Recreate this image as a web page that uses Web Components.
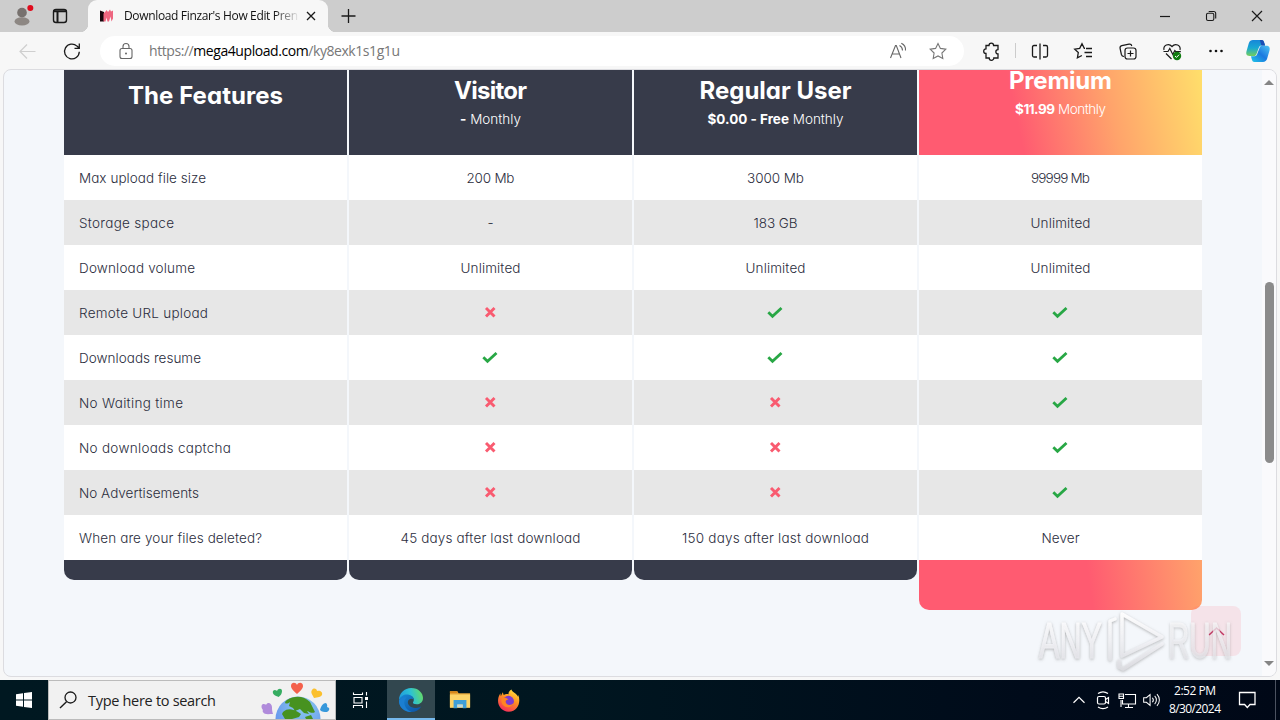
<!DOCTYPE html>
<html lang="en">
<head>
<meta charset="utf-8">
<title>Download</title>
<style>
  body {
    margin: 0;
    width: 1280px;
    height: 720px;
    overflow: hidden;
    display: flex;
    flex-direction: column;
    background: #f7f7f7;
    font-family: "Open Sans", "Noto Sans", sans-serif;
    color: #111;
  }
</style>
</head>
<body>
<browser-tabs></browser-tabs>
<browser-toolbar></browser-toolbar>
<page-view>
  <plan-table>
    <plan-column kind="names">
      <fit-text slot="title" w="155">The Features</fit-text>
      <plan-cell w="127">Max upload file size</plan-cell>
      <plan-cell w="95">Storage space</plan-cell>
      <plan-cell w="116">Download volume</plan-cell>
      <plan-cell w="129">Remote URL upload</plan-cell>
      <plan-cell w="122">Downloads resume</plan-cell>
      <plan-cell w="104">No Waiting time</plan-cell>
      <plan-cell w="152">No downloads captcha</plan-cell>
      <plan-cell w="120">No Advertisements</plan-cell>
      <plan-cell w="183">When are your files deleted?</plan-cell>
    </plan-column>
    <plan-column>
      <fit-text slot="title" w="73">Visitor</fit-text>
      <fit-text slot="price" w="61"><b>-</b> Monthly</fit-text>
      <plan-cell w="48">200 Mb</plan-cell>
      <plan-cell w="6">-</plan-cell>
      <plan-cell w="60">Unlimited</plan-cell>
      <plan-cell mark="no"></plan-cell>
      <plan-cell mark="yes"></plan-cell>
      <plan-cell mark="no"></plan-cell>
      <plan-cell mark="no"></plan-cell>
      <plan-cell mark="no"></plan-cell>
      <plan-cell w="180">45 days after last download</plan-cell>
    </plan-column>
    <plan-column>
      <fit-text slot="title" w="152">Regular User</fit-text>
      <fit-text slot="price" w="136"><b>$0.00 - Free</b> Monthly</fit-text>
      <plan-cell w="57">3000 Mb</plan-cell>
      <plan-cell w="44">183 GB</plan-cell>
      <plan-cell w="60">Unlimited</plan-cell>
      <plan-cell mark="yes"></plan-cell>
      <plan-cell mark="yes"></plan-cell>
      <plan-cell mark="no"></plan-cell>
      <plan-cell mark="no"></plan-cell>
      <plan-cell mark="no"></plan-cell>
      <plan-cell w="187">150 days after last download</plan-cell>
    </plan-column>
    <plan-column kind="premium">
      <fit-text slot="title" w="103">Premium</fit-text>
      <fit-text slot="price" w="91"><b>$11.99</b> Monthly</fit-text>
      <plan-cell w="59">99999 Mb</plan-cell>
      <plan-cell w="60">Unlimited</plan-cell>
      <plan-cell w="60">Unlimited</plan-cell>
      <plan-cell mark="yes"></plan-cell>
      <plan-cell mark="yes"></plan-cell>
      <plan-cell mark="yes"></plan-cell>
      <plan-cell mark="yes"></plan-cell>
      <plan-cell mark="yes"></plan-cell>
      <plan-cell w="38">Never</plan-cell>
    </plan-column>
  </plan-table>
</page-view>
<task-bar></task-bar>

<script>
const ICONS = {
  profile: `<g stroke="none"><circle cx="12" cy="8" r="5.800" fill="#77716e"/><ellipse cx="12" cy="18.500" rx="9" ry="5" fill="#8d8783"/><circle cx="22" cy="2.500" r="3.600" fill="#e00b1c"/></g>`,
  workspaces: `<rect x="5.5" y="5.5" width="13" height="13" rx="2.5" stroke-width="1.4"/><path d="M5 7.3h14M9.5 8v10" stroke-width="2"/>`,
  favicon: `<path d="M5 6.5l4 1.5v9.500H5z" fill="#16060d" stroke="none"/><path d="M8.500 17.500V9.500l2.500-2.500.5-1 1.500 2 2-2.500 1 2 2-1v8l-1.500 3-1-5-1.500 5h-1.500l-1-4-1 4z" fill="#ee6680" stroke="none"/>`,
  close: `<path d="M8 8l8 8M16 8l-8 8" stroke-width="1.3"/>`,
  plus: `<path d="M12.500 5v14M5.500 12h14" stroke-width="1.3"/>`,
  min: `<path d="M7 12.500h10" stroke-width="1.200"/>`,
  restore: `<rect x="7.500" y="9.200" width="7.300" height="7.300" rx="1.500"/><path d="M9.700 7.500h5c1.300 0 2 .7 2 2v5"/>`,
  exit: `<path d="M7 7l10 10M17 7L7 17" stroke-width="1.200"/>`,
  back: `<path d="M19.500 12.500h-15M11 5.500l-7 7 7 7" stroke="#cfcfcf" stroke-width="1.200"/>`,
  reload: `<path d="M19.300 12.700A7.400 7.400 0 1 1 17 7.100l2 1.800M19.300 4.500v4.800h-4.800" stroke-width="1.300"/>`,
  lock: `<rect x="6" y="9.500" width="12" height="10" rx="2" stroke="#666"/><path d="M9 9.500V7.500a3 3 0 0 1 6 0v2" stroke="#666"/><circle cx="12" cy="14.500" r="1" fill="#666" stroke="none"/>`,
  read: `<path d="M4.500 19L9.500 6.500h.8L15 19M6.300 15h7M13.500 6.500c2 1 3 2.500 3 5M15.300 4.300c3 1.400 4.500 4 4.200 7.200" stroke="#666"/>`,
  star: `<path d="M12 4.500l2.400 4.900 5.400.8-3.900 3.800.9 5.400-4.800-2.500-4.800 2.500.9-5.400-3.900-3.800 5.400-.8z" stroke="#777"/>`,
  puzzle: `<path d="M9 6.500a2.300 2.300 0 1 1 4.600 0H18v4.200a1.900 1.900 0 1 0 0 4.300v4h-4.200a2.300 2.300 0 0 1-4.600 0H6v-4.500a2.300 2.300 0 1 1 0-4.600V6.500z" stroke-width="1.300"/>`,
  split: `<path d="M12 4.500v16M9 6.500H6c-1 0-1.500.5-1.500 1.500v8.500c0 1 .5 1.500 1.500 1.500h3M15 6.500h3c1 0 1.500.5 1.500 1.500v8.500c0 1-.5 1.500-1.500 1.500h-3" stroke-width="1.300"/>`,
  favs: `<path d="M13 9.300h-.700L10 4.700 7.700 9.300l-5 .8 3.600 3.500-.9 5.300 4.500-2.400M14 9.500h6M12.500 13.500H20M14 17.500h6" stroke-width="1.300"/>`,
  collect: `<path d="M8 17.500c-1.500 0-2.300-.8-2.600-2l-1.300-6c-.3-1.500.4-2.500 1.700-2.800l7.200-1.500c1.500-.3 2.500.4 2.800 1.800" stroke-width="1.200"/><rect x="9" y="9" width="11" height="11" rx="2.500" stroke-width="1.200"/><path d="M14.500 11.500v6M11.500 14.500h6" stroke-width="1.200"/>`,
  health: `<path d="M4 11C3 6.500 8.500 3.500 12 7.500c3.500-4 9-1 8 3.500M6 14.500l5.500 5.500M3.500 12.500H8l1.800-3 3 6 2-4 1 1.200h5" stroke-width="1.200"/><circle cx="17" cy="17" r="4.200" fill="#107c10" stroke="none"/><path d="M15 17l1.500 1.400 2.600-2.700" stroke="#fff" stroke-width="1"/>`,
  dots: `<g fill="#111" stroke="none"><circle cx="6.500" cy="12" r="1.300"/><circle cx="12" cy="12" r="1.300"/><circle cx="17.500" cy="12" r="1.300"/></g>`,
  copilot: `<defs><linearGradient id="a" x1="0" y1="0" x2="0" y2="1"><stop offset="0" stop-color="#1686d9"/><stop offset=".5" stop-color="#18a8d3"/><stop offset="1" stop-color="#74cf5c"/></linearGradient><linearGradient id="b" x1="1" y1="0" x2="0" y2="1"><stop offset="0" stop-color="#4fc6f4"/><stop offset=".5" stop-color="#1b79e0"/><stop offset="1" stop-color="#20c7e8"/></linearGradient></defs><g stroke="none"><path d="M7 1h8.500c1.800 0 2.200 1 2.800 3l.8 2.500h-3.500c-1.700 0-2.400 1-2.900 2.600L10.500 15c-.5 1.500-1.300 2-2.700 2H3.500C.5 17-.2 15 .5 12.300l2.300-8C3.500 2 5 1 7 1z" fill="url(#a)"/><path d="M17 23H8.500c-1.800 0-2.200-1-2.800-3L5 17.300h3.500c1.700 0 2.300-.9 2.800-2.500L13.500 9c.5-1.500 1.200-2.200 2.700-2.200h4.300c3 0 3.700 2.200 3 4.800l-2.300 8C20.500 22 19 23 17 23z" fill="url(#b)"/><path d="M13.800 1h1.700c1.800 0 2.200 1 2.800 3l.8 2.600h-3.700z" fill="#1b4eb5"/></g>`,
  start: `<g fill="#fff" stroke="none"><path d="M4 6.200l7-1v6.300H4zM12 5.100L20 4v7.500h-8zM4 12.500h7v6.300l-7-1zM12 12.500h8V20l-8-1.100z"/></g>`,
  search: `<circle cx="14.500" cy="9.500" r="5.500" stroke-width="1.300"/><path d="M10.500 13.700L4 20" stroke-width="1.400"/>`,
  taskview: `<path d="M4.500 4.500v2h9v-2M4.500 20v-2.500h9V20M5 9.500h8v5.500H5zM17.500 4v3.500M17.500 13.500V20" stroke="#fff" stroke-width="1.100"/><rect x="16" y="9" width="3" height="3" fill="#fff" stroke="none"/>`,
  edge: `<defs><linearGradient id="c" x1="0" y1=".5" x2="1" y2=".3"><stop offset="0" stop-color="#1f9bdc"/><stop offset=".5" stop-color="#2cc1d5"/><stop offset="1" stop-color="#67dc63"/></linearGradient><linearGradient id="d" x1="0" y1="0" x2="1" y2="1"><stop offset="0" stop-color="#178ad8"/><stop offset="1" stop-color="#0d4fa0"/></linearGradient></defs><g stroke="none"><path d="M0 12C0 5 5.500 0 12.200 0 19.500 0 24 5 24 10c0 4-3 6.300-6.300 6.300-2.700 0-4-1-3.700-2 1.600-2 1-5.300-2-6.300C7 6.500 2 8 0 12z" fill="url(#c)"/><path d="M0 12.500C1.500 7.700 6 5.800 10 6.800c3 .8 4.700 2.700 4.600 5-1.600-2-5.100-1.200-5.700 1.700-.7 3.500 3.500 7.500 9.600 6.200 1.600-.3 2.900-1 3.700-1.300C20 22 16.300 24 12 24 5.300 24-.2 19 0 12.500z" fill="url(#d)"/><path d="M7.700 9.500C3 13 5.500 21.500 12.500 23.900 5.500 24.400 0 19 0 12.800 2 9.500 5 8.500 7.700 9.500z" fill="#1b7fd2"/></g>`,
  explorer: `<g stroke="none"><path d="M1 2.500h8l1.500 2H23V20H1z" fill="#e5a63a"/><path d="M1 6h22v14.500H1z" fill="#fdd469"/><path d="M1 2.500h8.200v2H1z" fill="#d98719"/><path d="M5 12h14v9h-4v-4H9v4H5z" fill="#3f9fd9"/><path d="M9 17h6v3H9z" fill="#bfd9e2"/></g>`,
  firefox: `<defs><linearGradient id="e" x1=".8" y1="0" x2=".3" y2="1"><stop offset="0" stop-color="#ffe43f"/><stop offset=".45" stop-color="#ff9022"/><stop offset="1" stop-color="#f52b5c"/></linearGradient></defs><g stroke="none"><path d="M3.500 4.500l.5 3 2-4 1 2.700C9 5 10.500 5.200 12 5.500c0-2.500 1.300-4 3.200-5 .2 2.600 5.300 4 6.800 7.500l.2-2C25 13 22.500 23.500 12 23.700 3.500 23.700-2.500 14 3.500 4.500z" fill="url(#e)"/><circle cx="12" cy="12.800" r="5.700" fill="#7c3bd0"/><path d="M5 9.500c3-1 5-.5 7 1.500-2 .2-3 1-3 2.500 1 4 6 4 8.500.8-1 5-8 6.700-11.500 2.200-1.500-2-1.800-4.500-1-7z" fill="#ff8423"/></g>`,
  up: `<path d="M6 15l6-6 6 6" stroke="#fff" stroke-width="1.300"/>`,
  meet: `<g stroke="#fff" stroke-width="1.200"><rect x="6.500" y="8.500" width="8" height="7.500" rx="1.500"/><path d="M14.500 11.500l3-2v6l-3-2M7 5.500c3-2 7-2 10 0M7 19c3 2 7 2 10 0"/></g>`,
  network: `<g stroke="#fff" stroke-width="1.100"><path d="M10 6.500h10.500v9.500H7.500v-4M13.500 16v3.500M10 19.500h8M6 12v7M4 6h4.500v4.500H4zM4 8.200h4.500"/></g>`,
  volume: `<g stroke="#fff" stroke-width="1.100"><path d="M4 9.500h3l4-3.500v12l-4-3.500H4zM13.500 9.500c1.300 1.500 1.300 3.500 0 5M16 7.500c2.500 2.500 2.500 6.500 0 9M18.500 5.500c3.500 3.700 3.500 9.300 0 13"/></g>`,
  notify: `<path d="M4.500 4.500h15.500v12h-5l-2.700 3-2.700-3H4.500z" stroke="#fff" stroke-width="1.300"/>`,
  yes: `<path d="M4.300 11.300l4.200 4L17.500 7" stroke="#28a745" stroke-width="2.800"/>`,
  no: `<path d="M7 7l8.500 8.500M15.500 7L7 15.500" stroke="#f95b70" stroke-width="2.900"/>`,
  earth: `<svg viewBox="0 0 72 38" width="72" height="38"><defs><radialGradient id="g" cx=".6" cy=".2" r=".9"><stop offset="0" stop-color="#8bcbee"/><stop offset=".7" stop-color="#6a9bee"/><stop offset="1" stop-color="#3b6fd8"/></radialGradient></defs><g stroke="none"><circle cx="38" cy="38" r="22.500" fill="url(#g)"/><path d="M27 19c8-5 17-4 23 2l5 10c-3 2-5 0-8-1l2 3-5-1-4-4-5 2-2-3-4-2 1-4c-4 3-7 1-3-2zM23 31c5-4 9-3 15 0l3 2-2 3-7 2h-7l-3-5zM45 36l6-2 2 4h-7z" fill="#479220"/><path d="M31 5c0-4 5-4 6-1 1-3 6-3 6 1 0 3-3 5-6 8-3-3-6-5-6-8z" fill="#f4604b"/><path d="M13 10c2-2 4 0 4 0 1-3 5-3 5 0 0 4-3 5-3 6-4-1-7-3-6-6z" fill="#36ad61"/><path d="M52 9c2-3 5-1 5 1 3-1 6 1 5 4-1 2-4 2-8 3-1-3-4-5-2-8z" fill="#fbc02e"/><path d="M3 23c3 0 3 1 3 1 2-4 6-1 6 2 0 2 0 4 1 7-4 0-9 1-10-2-1-1 0-2 0-2-2-2-2-5 0-6z" fill="#b08bdb"/><path d="M66 22c2 2 1 4 1 4 4 1 2 4 0 5-3 0-5 0-7-2 1-4 3-7 6-7z" fill="#3698db"/></g></svg>`
};

class UiIcon extends HTMLElement {
  constructor() {
    super();
    this.attachShadow({mode: "open"});
  }

  connectedCallback() {
    const size = this.getAttribute("size") || 24;
    this.shadowRoot.innerHTML = `
      <style>
        :host { display: inline-flex; flex: none; }
        svg { display: block; overflow: visible; }
      </style>
      <svg width="${size}" height="${size}" viewBox="0 0 24 24" fill="none" stroke="#1a1a1a" stroke-width="1.1">${ICONS[this.getAttribute("name")]}</svg>`;
  }
}

class PictureIcon extends HTMLElement {
  connectedCallback() {
    this.attachShadow({mode: "open"}).innerHTML = `
      <style>:host { display: block; flex: none; } svg { display: block; }</style>
      ${ICONS.earth}`;
  }
}

// a run of text spaced out (or in) to the width in its "w" attribute
class FitText extends HTMLElement {
  constructor() {
    super();
    this.attachShadow({mode: "open"}).innerHTML = `
      <style>
        :host { display: inline-block; white-space: nowrap; flex: none; }
        span { display: inline-block; }
        ::slotted(b) { font-weight: 700; }
      </style>
      <span><slot></slot></span>`;
  }

  connectedCallback() {
    const want = Number(this.getAttribute("w"));
    const run = this.shadowRoot.querySelector("span");
    const count = this.textContent.trim().length;
    this.style.width = want + "px";
    if (count > 1) {
      const natural = run.getBoundingClientRect().width;
      run.style.letterSpacing = (want - natural) / (count - 1) + "px";
    }
  }
}

class BrowserTabs extends HTMLElement {
  connectedCallback() {
    this.attachShadow({mode: "open"}).innerHTML = `
      <style>
        :host { display: flex; flex: none; height: 32px; background: #cdcdcd; align-items: center; }
        .cell { display: flex; justify-content: center; flex: none; }
        .tab {
          display: flex; align-items: center; width: 240px; height: 32px; box-sizing: border-box;
          padding-left: 7px; background: #f7f7f7; border-radius: 9px 9px 0 0;
        }
        .curve { width: 8px; height: 32px; background: radial-gradient(circle at 0 24px, transparent 8px, #f7f7f7 8.5px) 0 0; flex: none; }
        .curve { clip-path: inset(24px 0 0 0); }
        .curve.end { background: radial-gradient(circle at 8px 24px, transparent 8px, #f7f7f7 8.5px); }
        .title {
          width: 175px; margin-left: 5px; overflow: hidden; font-size: 12px; line-height: 20px;
          -webkit-mask-image: linear-gradient(to right, #000 150px, transparent 176px);
        }
        .cell.x { width: 24px; }
        .grow { flex: 1; }
      </style>
      <div class="cell" style="width:44px"><ui-icon name="profile" size="20"></ui-icon></div>
      <div class="cell" style="width:32px"><ui-icon name="workspaces"></ui-icon></div>
      <div class="curve" style="margin-left:4px"></div>
      <div class="tab">
        <ui-icon name="favicon"></ui-icon>
        <div class="title"><fit-text w="174">Download Finzar's How Edit Pren</fit-text></div>
        <div class="cell x"><ui-icon name="close"></ui-icon></div>
      </div>
      <div class="curve end"></div>
      <div class="cell" style="width:24px"><ui-icon name="plus"></ui-icon></div>
      <div class="grow"></div>
      <div class="cell" style="width:46px"><ui-icon name="min"></ui-icon></div>
      <div class="cell" style="width:46px"><ui-icon name="restore"></ui-icon></div>
      <div class="cell" style="width:46px"><ui-icon name="exit"></ui-icon></div>`;
  }
}

class BrowserToolbar extends HTMLElement {
  connectedCallback() {
    this.attachShadow({mode: "open"}).innerHTML = `
      <style>
        :host { display: flex; flex: none; height: 37px; background: #f7f7f7; align-items: center; }
        .cell { display: flex; justify-content: center; flex: none; width: 44px; }
        .address {
          display: flex; align-items: center; flex: none; width: 864px; height: 30px;
          margin-left: 6px; background: #fff; border-radius: 15px; box-sizing: border-box; padding: 0 14px;
        }
        .url { flex: 1; margin-left: 11px; font-size: 14px; line-height: 20px; color: #777; }
        .url b { font-weight: 400; color: #000; }
        .rule { width: 1px; height: 15px; background: #ccc; flex: none; }
      </style>
      <div class="cell" style="margin-left:6px"><ui-icon name="back"></ui-icon></div>
      <div class="cell"><ui-icon name="reload"></ui-icon></div>
      <div class="address">
        <ui-icon name="lock"></ui-icon>
        <div class="url"><fit-text w="251">https://<b>mega4upload.com</b>/ky8exk1s1g1u</fit-text></div>
        <ui-icon name="read"></ui-icon>
        <ui-icon name="star" style="margin-left:16px"></ui-icon>
      </div>
      <div class="cell" style="margin-left:6px"><ui-icon name="puzzle"></ui-icon></div>
      <div class="rule" style="margin-left:1px"></div>
      <div class="cell" style="margin-left:2px"><ui-icon name="split"></ui-icon></div>
      <div class="cell"><ui-icon name="favs"></ui-icon></div>
      <div class="cell"><ui-icon name="collect"></ui-icon></div>
      <div class="cell"><ui-icon name="health"></ui-icon></div>
      <div class="cell"><ui-icon name="dots"></ui-icon></div>
      <div class="cell" style="width:40px"><ui-icon name="copilot"></ui-icon></div>`;
  }
}

class PageView extends HTMLElement {
  connectedCallback() {
    this.attachShadow({mode: "open"}).innerHTML = `
      <style>
        :host {
          display: flex; position: relative; flex: none; width: 1274px; height: 608px; margin: 0 0 3px 3px;
          box-sizing: border-box; border: 1px solid #dcdce0; border-radius: 8px; overflow: hidden;
          background: #f4f7fb;
        }
        .content { flex: 1; padding-left: 60px; }
        .bar {
          display: flex; flex-direction: column; align-items: center; justify-content: space-between;
          width: 14px; height: 606px; background: #fafafc; box-sizing: border-box; padding: 10px 0 10px;
        }
        .arrow { border: 5px solid transparent; border-top: 0; border-bottom: 5px solid #858585; }
        .arrow.down { border-bottom: 0; border-top: 5px solid #858585; }
        .thumb { width: 9px; height: 181px; border-radius: 5px; background: #8b8b8b; margin-bottom: 2px; }
        .top {
          position: absolute; left: 1187px; top: 536px; width: 50px; height: 50px; border-radius: 8px;
          background: rgba(255, 91, 113, .13);
        }
        .mark { position: absolute; left: 1026px; top: 530px; overflow: visible; }
      </style>
      <div class="content"><slot></slot></div>
      <div class="bar"><div class="arrow"></div><div class="thumb"></div><div class="arrow down"></div></div>
      <div class="top"></div>
      <svg class="mark" width="220" height="76" viewBox="1030 600 220 76" fill="none">
        <defs><filter id="s" x="-10%" y="-20%" width="120%" height="150%"><feDropShadow dx="0" dy="1" stdDeviation="1.500" flood-color="#777" flood-opacity=".6"/></filter>
        <linearGradient id="w" gradientUnits="userSpaceOnUse" x1="0" y1="612" x2="0" y2="670"><stop offset="0" stop-color="#fff" stop-opacity=".95"/><stop offset=".5" stop-color="#f4f4f8" stop-opacity=".85"/><stop offset="1" stop-color="#dddde2" stop-opacity=".85"/></linearGradient></defs>
        <path d="M1209 635l7.500-7 7.500 7" stroke="#c53763" stroke-width="1.600"/>
        <g filter="url(#s)" fill="url(#w)" stroke="url(#w)" stroke-width=".8" font-family="Liberation Sans, sans-serif" font-size="50">
          <text x="1039" y="658" textLength="63" lengthAdjust="spacingAndGlyphs">ANY</text>
          <text x="1168" y="658" textLength="64" lengthAdjust="spacingAndGlyphs" opacity=".75">RUN</text>
          <g fill="none" stroke-width="3.500" stroke-linejoin="round" stroke-linecap="round">
            <path d="M1122 614v41M1122 614l40 23-40 19"/>
            <path d="M1115 619l-5 2v38M1119 661v6l4 2 39-25"/>
          </g>
        </g>
      </svg>`;
  }
}

class PlanTable extends HTMLElement {
  connectedCallback() {
    this.attachShadow({mode: "open"}).innerHTML = `
      <style>
        :host {
          display: grid; grid-template-columns: repeat(4, 283px); column-gap: 2px; align-items: start;
          font-family: Inter, "Open Sans", sans-serif; font-feature-settings: "cv11", "ss03"; font-size: 13.500px; font-weight: 300; color: #2b2d3d;
        }
      </style>
      <slot></slot>`;
  }
}

class PlanColumn extends HTMLElement {
  connectedCallback() {
    this.attachShadow({mode: "open"}).innerHTML = `
      <style>
        :host { display: block; --bar: #373b4a; --foot: #373b4a; }
        :host([kind=premium]) {
          --bar: linear-gradient(78deg, #ff5b71 35%, #ffa36b 67%, #ffdf6b 100%);
          --foot: linear-gradient(82deg, #ff5b71 60%, #ffa36b 100%);
        }
        header {
          display: flex; flex-direction: column; align-items: center; height: 85px; box-sizing: border-box;
          padding-top: 8px; background: var(--bar); color: #fff;
        }
        :host([kind=names]) header { padding-top: 13px; }
        :host([kind=premium]) header { padding-top: 0; }
        .title { font-size: 24px; font-weight: 700; line-height: 25px; }
        .price { font-size: 13.500px; line-height: 20px; margin-top: 6px; }
        :host([kind=premium]) .title { margin-top: -2px; }
        footer { height: 20px; background: var(--foot); border-radius: 0 0 10px 10px; }
        :host([kind=premium]) footer { height: 50px; }
        .rows { display: grid; grid-auto-rows: 45px; }
        ::slotted(plan-cell) { background: #fff; }
        ::slotted(plan-cell:nth-of-type(even)) { background: #e7e7e7; }
        :host([kind=names]) ::slotted(plan-cell) { justify-content: flex-start; padding-left: 15px; }
      </style>
      <header>
        <div class="title"><slot name="title"></slot></div>
        <div class="price"><slot name="price"></slot></div>
      </header>
      <div class="rows"><slot></slot></div>
      <footer></footer>`;
  }
}

class PlanCell extends HTMLElement {
  connectedCallback() {
    const mark = this.getAttribute("mark");
    this.attachShadow({mode: "open"}).innerHTML = `
      <style>
        :host { display: flex; align-items: center; justify-content: center; line-height: 20px; padding-top: 1px; box-sizing: border-box; }
      </style>
      ${mark ? `<ui-icon name="${mark}"></ui-icon>` : `<fit-text w="${this.getAttribute("w")}">${this.textContent}</fit-text>`}`;
  }
}

class TaskBar extends HTMLElement {
  connectedCallback() {
    this.attachShadow({mode: "open"}).innerHTML = `
      <style>
        :host {
          display: flex; flex: none; height: 40px; align-items: center; color: #fff; font-size: 12px;
          background: linear-gradient(to right, #001821 0, #001620 45%, #000b1a 80%, #000817 100%);
        }
        .cell { display: flex; align-items: center; justify-content: center; flex: none; height: 40px; width: 48px; }
        .search {
          display: flex; align-items: center; width: 288px; height: 40px; box-sizing: border-box; flex: none;
          background: #f1f1f1; border: 1px solid #bbb; color: #222; font-size: 14.500px; padding-left: 7px;
        }
        .search .label { flex: 1; margin-left: 8px; }
        .on { background: #32474f; box-shadow: inset 0 -2px #76b9ed; }
        .tray { width: 24px; }
        .grow { flex: 1; }
        .clock { display: flex; flex-direction: column; align-items: center; width: 64px; line-height: 18px; flex: none; }
        .edge { width: 1px; height: 40px; background: #4b5260; margin: 0 4px 0 4px; }
      </style>
      <div class="cell"><ui-icon name="start"></ui-icon></div>
      <div class="search">
        <ui-icon name="search"></ui-icon>
        <div class="label"><fit-text w="128">Type here to search</fit-text></div>
        <picture-icon style="margin-right:3px"></picture-icon>
      </div>
      <div class="cell" style="width:50px"><ui-icon name="taskview"></ui-icon></div>
      <div class="cell on" style="margin-left:1px"><ui-icon name="edge"></ui-icon></div>
      <div class="cell" style="margin-left:1px"><ui-icon name="explorer" size="22"></ui-icon></div>
      <div class="cell" style="width:49px"><ui-icon name="firefox" size="23"></ui-icon></div>
      <div class="grow"></div>
      <div class="cell tray"><ui-icon name="up" size="22"></ui-icon></div>
      <div class="cell tray"><ui-icon name="meet"></ui-icon></div>
      <div class="cell tray"><ui-icon name="network"></ui-icon></div>
      <div class="cell tray"><ui-icon name="volume" size="22"></ui-icon></div>
      <div class="clock"><fit-text w="42">2:52 PM</fit-text><fit-text w="52">8/30/2024</fit-text></div>
      <div class="cell" style="width:40px"><ui-icon name="notify"></ui-icon></div>
      <div class="grow" style="flex:0 0 4px"></div>
      <div class="edge"></div>`;
  }
}

customElements.define("ui-icon", UiIcon);
customElements.define("picture-icon", PictureIcon);
customElements.define("browser-tabs", BrowserTabs);
customElements.define("browser-toolbar", BrowserToolbar);
customElements.define("page-view", PageView);
customElements.define("plan-table", PlanTable);
customElements.define("plan-column", PlanColumn);
customElements.define("plan-cell", PlanCell);
customElements.define("task-bar", TaskBar);
// last, so that every run is measured in its final font
customElements.define("fit-text", FitText);
</script>
</body>
</html>
